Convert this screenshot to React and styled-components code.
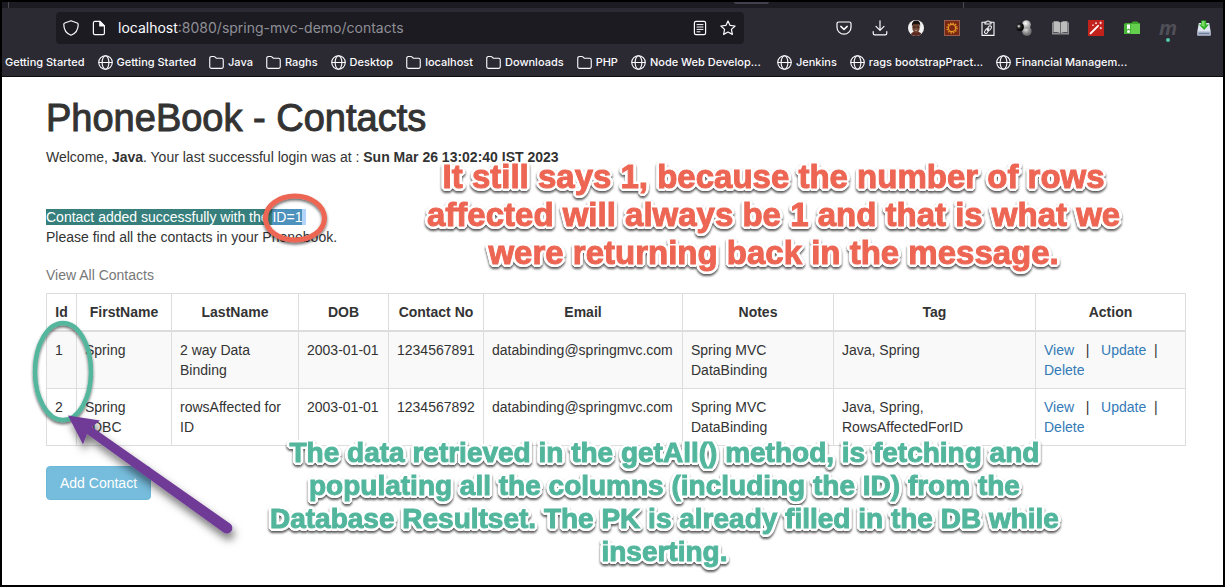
import React from 'react';
import styled, { createGlobalStyle } from 'styled-components';

const GlobalStyle = createGlobalStyle`
  * { box-sizing: border-box; }
  body {
    margin: 0;
    background: #fff;
    color: #333;
    font: 14px/20px "Liberation Sans", Arial, sans-serif;
  }
`;

const Frame = styled.div`
  min-height: 100vh;
  border: 2px solid #000;
  display: flex;
  flex-direction: column;
  overflow: hidden;
`;

/* ---------- browser chrome ---------- */

const Chrome = styled.header`
  background: #2b2a33;
  color: #fbfbfe;
  font-family: Inter, "Liberation Sans", sans-serif;
  border-bottom: 1px solid #0c0c0d;
`;

const TabStrip = styled.div`
  height: 6px;
  background: #1c1b22;
  display: flex;
  padding: 0 259px 0 6px;
`;

const TabDivider = styled.span`
  width: 1px;
  background: #4a4953;
`;

const TabHandle = styled.span`
  width: 35px;
  height: 2px;
  margin-left: auto;
  margin-right: 194px;
  background: #42414d;
  border-radius: 0 0 2px 2px;
`;

const Toolbar = styled.div`
  display: flex;
  align-items: center;
  padding: 4px 1px 4px 54px;
`;

const AddressBar = styled.form`
  flex: 1;
  min-width: 0;
  height: 32px;
  display: flex;
  align-items: center;
  padding: 0 6px;
  background: #1c1b22;
  border-radius: 4px;
  margin-right: 82px;
  font-size: 14px;
`;

const AddressHost = styled.label`
  color: #fbfbfe;
`;

const AddressInput = styled.input`
  flex: 1;
  min-width: 0;
  border: 0;
  padding: 0;
  outline: 0;
  background: none;
  color: #8f8f96;
  font: inherit;
`;

const IconButton = styled.button`
  flex: none;
  width: ${p => p.$width || 36}px;
  height: 32px;
  padding: 0;
  border: 0;
  background: none;
  color: inherit;
  display: flex;
  align-items: center;
  justify-content: center;
  svg { display: block; overflow: visible; }
`;

const Extensions = styled.div`
  display: flex;
`;

const Bookmarks = styled.nav`
  display: flex;
  gap: 13px;
  height: 28px;
  padding-left: 3px;
  align-items: center;
  white-space: nowrap;
  font-size: 11px;
  font-weight: 500;
`;

const Bookmark = styled.a`
  display: flex;
  flex: none;
  align-items: center;
  gap: 4px;
  min-width: ${p => (p.$wide ? '133px' : '0')};
  color: inherit;
  text-decoration: none;
`;

/* ---------- page ---------- */

const Page = styled.main`
  position: relative;
  flex: 1;
  padding: 20px 37px 20px 44px;
`;

const Title = styled.h1`
  margin: 0 0 8px;
  font-size: 38px;
  line-height: 42px;
  font-weight: 400;
  -webkit-text-stroke: 1px #333;
`;

const Line = styled.p`
  margin: 0;
`;

const Messages = styled.section`
  margin-top: 40px;
`;

const Marked = styled.span`
  background: ${p => p.$tone};
  color: #fff;
`;

const ContactsTable = styled.table`
  width: 100%;
  margin: 10px 0 20px;
  table-layout: fixed;
  border-collapse: collapse;
  border: 1px solid #ddd;
`;

const Caption = styled.caption`
  padding: 8px 0;
  color: #777;
  text-align: left;
`;

const Col = styled.col`
  width: ${p => (p.$width ? `${p.$width}px` : 'auto')};
`;

const Th = styled.th`
  padding: 8px;
  border: 1px solid #ddd;
  border-bottom-width: 2px;
  text-align: center;
  white-space: nowrap;
`;

const Td = styled.td`
  padding: 8px;
  border: 1px solid #ddd;
  vertical-align: top;
`;

const Row = styled.tr`
  background: ${p => (p.$striped ? '#f9f9f9' : '#fff')};
`;

const ActionLink = styled.a`
  color: #337ab7;
  text-decoration: none;
`;

const AddButton = styled.button`
  height: 34px;
  padding: 0 13px;
  border: 1px solid #6bb9d9;
  border-radius: 4px;
  background: #76bcdc;
  color: #fff;
  font: inherit;
`;

/* ---------- annotations over the page ---------- */

const Note = styled.p`
  position: absolute;
  z-index: 2;
  margin: 0;
  top: ${p => p.$top}px;
  left: ${p => p.$left}px;
  color: ${p => p.$color};
  font-size: ${p => p.$size}px;
  line-height: ${p => p.$leading}px;
  font-weight: 700;
  text-align: center;
  white-space: nowrap;
  -webkit-text-stroke: 1px ${p => p.$color};
  text-shadow:
    3px 0 #fff, -3px 0 #fff, 0 3px #fff, 0 -3px #fff,
    2px 2px #fff, -2px 2px #fff, 2px -2px #fff, -2px -2px #fff,
    3px 1px #fff, -3px 1px #fff, 1px 3px #fff, -1px 3px #fff,
    3px -1px #fff, -3px -1px #fff, 1px -3px #fff, -1px -3px #fff;
  filter: drop-shadow(0 2px 1px rgba(0, 0, 0, 0.65));
  pointer-events: none;
`;

const Drawing = styled.svg`
  position: absolute;
  z-index: 1;
  top: 0;
  left: 0;
  overflow: visible;
  pointer-events: none;
`;

/* ---------- icons ---------- */

const Svg = ({ size = 16, children }) => (
  <svg width={size} height={size} viewBox="0 0 16 16" fill="none" stroke="currentColor"
    strokeWidth="1.2" strokeLinecap="round" strokeLinejoin="round" aria-hidden="true">{children}</svg>
);

const Globe = () => (
  <Svg size={15}>
    <circle cx="8" cy="8" r="7.2" />
    <ellipse cx="8" cy="8" rx="3.6" ry="7.2" />
    <path d="M1 8h14" />
  </Svg>
);
const Folder = () => (
  <Svg size={15}>
    <path d="M.8 12.4V3.4a1.8 1.8 0 0 1 1.8-1.8h2.6c.6 0 1 .2 1.4.6l1.1 1.2h5.7a1.8 1.8 0 0 1 1.8 1.8v7.200a1.800 1.800 0 0 1-1.800 1.800H2.600A1.800 1.800 0 0 1 .8 12.400z" />
  </Svg>
);
const Shield = () => (
  <Svg><path d="M8 .8 14.200 3c.7.3 1 .7 1 1.400 0 5-2.200 8.800-7.200 10.800C3 13.200.8 9.400.8 4.400c0-.7.3-1.100 1-1.400z" /></Svg>
);
const PageIcon = () => (
  <Svg>
    <path d="M3.800 1.400h5.200l4.400 4.400v7.400c0 .8-.6 1.400-1.400 1.400H3.800c-.8 0-1.400-.6-1.400-1.400V2.800c0-.8.600-1.400 1.400-1.400z" />
    <path d="M8.800 1.400v4.600h4.600z" fill="currentColor" />
  </Svg>
);
const Reader = () => (
  <Svg>
    <rect x="2.400" y="1.400" width="11.200" height="13.200" rx="1.600" />
    <path d="M5 4.600h6M5 7h6M5 9.400h6M5 11.800h3" strokeWidth="1" />
  </Svg>
);
const Star = () => (
  <Svg><path d="M8 .9l2.100 4.500 5 .6-3.700 3.400 1 5L8 12l-4.400 2.400 1-5L.9 6l5-.6z" /></Svg>
);
const Pocket = () => (
  <Svg>
    <path d="M2.600 2h10.800c.9 0 1.600.7 1.600 1.600v3.600a7 7 0 0 1-14 0V3.600C1 2.700 1.700 2 2.600 2z" />
    <path d="M4.800 6.400 8 9.400l3.200-3" strokeWidth="1.500" />
  </Svg>
);
const Download = () => (
  <Svg>
    <path d="M8 .8v9.400M4 6.400l4 4 4-4M1.200 11.600v1.600c0 1 .7 1.600 1.600 1.600h10.400c1 0 1.600-.7 1.600-1.600v-1.600" />
  </Svg>
);
const Avatar = () => (
  <svg width="16" height="16" viewBox="0 0 16 16" aria-hidden="true">
    <clipPath id="face"><circle cx="8" cy="8" r="8" /></clipPath>
    <g clipPath="url(#face)">
      <rect width="16" height="16" fill="#f2f2f2" />
      <path d="M2.500 16c0-3 2-4.500 5.500-4.500s6 1.500 6 4.500z" fill="#5e2a22" />
      <ellipse cx="8" cy="7.400" rx="3.700" ry="5.300" fill="#6f4433" />
      <path d="M4 6.500C3.600 2.400 5.400.6 8.200.6s4.500 1.800 3.900 5.900l-1-2.300H5.200z" fill="#17120f" />
      <path d="M5 7h2.400M8.800 7h2.400" stroke="#251713" strokeWidth="1" />
      <path d="M6.600 10q1.400 1 2.800 0" stroke="#d9c4ba" fill="none" strokeWidth=".7" />
    </g>
  </svg>
);
const Sun = () => (
  <svg width="16" height="16" viewBox="0 0 16 16" aria-hidden="true">
    <rect x=".5" y=".5" width="15" height="15" fill="#7d2712" stroke="#95604f" />
    <circle cx="8" cy="8" r="3.600" fill="none" stroke="#e39a28" strokeWidth="1.200" />
    <circle cx="8" cy="8" r="4.900" fill="none" stroke="#e39a28" strokeWidth="1.500" strokeDasharray="1.300 1.265" />
  </svg>
);
const Clipboard = () => (
  <Svg>
    <path d="M5 2.200H2V15.400h12V2.200h-3" strokeWidth="1.100" />
    <path d="M5 4V2h1.500a1.600 1.600 0 0 1 3 0H11v2z" strokeWidth="1.100" />
    <rect x="8" y="5.600" width="3" height="4.800" rx="1.500" transform="rotate(32 9.500 8)" strokeWidth="1" />
    <rect x="5" y="8.800" width="3" height="4.800" rx="1.500" transform="rotate(32 6.500 11.200)" strokeWidth="1" />
    <path d="M7.200 10.800 9 8.200" strokeWidth="1" />
  </Svg>
);
const Balls = () => (
  <svg width="16" height="16" viewBox="0 0 16 16" aria-hidden="true">
    <radialGradient id="dark" cx=".35" cy=".4"><stop offset="0" stopColor="#fff" /><stop offset=".45" stopColor="#333" /><stop offset="1" stopColor="#050505" /></radialGradient>
    <radialGradient id="pale" cx=".4" cy=".35"><stop offset="0" stopColor="#fff" /><stop offset="1" stopColor="#a6a6a6" /></radialGradient>
    <radialGradient id="mid" cx=".4" cy=".35"><stop offset="0" stopColor="#ddd" /><stop offset="1" stopColor="#777" /></radialGradient>
    <circle cx="10.800" cy="11" r="4.800" fill="url(#mid)" />
    <circle cx="10.400" cy="4.600" r="4.400" fill="url(#pale)" />
    <circle cx="4" cy="7" r="3.900" fill="url(#dark)" />
  </svg>
);
const Book = () => (
  <svg width="17" height="14" viewBox="0 0 17 14" aria-hidden="true">
    <path d="M0 1.400h1V12h6.500l1 1 1-1H16V1.400h1V13.500H0z" fill="#8e8e90" />
    <path d="M1.400.4C4 0 7 0 8.200 1.400v10.800C6.500 11 4 11 1.400 11.600zM15.600.4C13 0 10 0 8.800 1.400v10.800c1.700-1.200 4.200-1.200 6.800-.6z" fill="#bcbcbc" />
    <path d="M8.500 1.200v11.600" stroke="#6b6b6d" />
  </svg>
);
const Wand = () => (
  <svg width="16" height="16" viewBox="0 0 16 16" aria-hidden="true">
    <rect width="16" height="16" fill="#c3211b" />
    <path d="M2.600 13.400 9.400 6.600" stroke="#fff" strokeWidth="2" strokeLinecap="round" />
    <path d="m9.600 6.400 1.200-1.200" stroke="#fff" strokeWidth="1.400" />
    <path d="M8 2.200v2M7 3.200h2M12.600 1.600v2.600M11.300 2.900h2.600M12.800 7v2.200M11.700 8.100h2.200M5 4.500v1.400M4.300 5.200h1.400" stroke="#fff" strokeWidth=".8" />
  </svg>
);
const GreenFolder = () => (
  <svg width="16" height="14" viewBox="0 0 16 14" aria-hidden="true">
    <path d="M0 3.500 1 2h6.500L9 .5h4L15 2h1v11H0z" fill="#3fa52c" />
    <path d="M0 3h7v10H0z" fill="#48b636" /><path d="M7 3h9v10H7z" fill="#63cf4c" />
    <path d="M3 3.400h3v5L4.500 7.400 3 8.400z" fill="#fff" />
    <circle cx="4.500" cy="10.400" r="1.500" fill="#fff" />
  </svg>
);
const LetterM = styled.span`
  display: block;
  position: relative;
  color: #504f58;
  font: italic 700 20px/20px "Open Sans", sans-serif;
  &::after {
    content: "";
    position: absolute;
    top: 20px;
    left: 50%;
    width: 4px;
    height: 4px;
    margin-left: -2px;
    border-radius: 50%;
    background: #54c8ac;
  }
`;
const Drive = () => (
  <svg width="14" height="16" viewBox="0 0 14 16" aria-hidden="true">
    <path d="M1.800 3h10.400L13.600 11v4.500H.4V11z" fill="#dfe5f1" />
    <path d="M.4 11.500h13.200v4H.4z" fill="#a4afc6" />
    <path d="M2 13.500h10" stroke="#71809a" strokeWidth="1" />
    <path d="M4.200.5h5v4h2.800L7.200 10 1.800 4.500h2.400z" fill="#35b127" />
    <path d="M5 1h2.600v6L3.600 5H5z" fill="#8fe878" opacity=".8" />
  </svg>
);

/* ---------- data ---------- */

const bookmarks = [
  { label: 'Getting Started' },
  { label: 'Getting Started', icon: Globe },
  { label: 'Java', icon: Folder },
  { label: 'Raghs', icon: Folder },
  { label: 'Desktop', icon: Globe },
  { label: 'localhost', icon: Folder },
  { label: 'Downloads', icon: Folder },
  { label: 'PHP', icon: Folder },
  { label: 'Node Web Develop...', icon: Globe, wide: true },
  { label: 'Jenkins', icon: Globe },
  { label: 'rags bootstrapPract...', icon: Globe, wide: true },
  { label: 'Financial Managem...', icon: Globe, wide: true },
];

const extensions = [
  ['Save to Pocket', Pocket], ['Downloads', Download], ['Account', Avatar],
  ['Sun', Sun], ['Copy link', Clipboard], ['Spheres', Balls], ['Reading list', Book],
  ['Wand', Wand], ['Archive', GreenFolder],
  ['Marker', () => <LetterM>m</LetterM>], ['Save to disk', Drive],
];

const columns = [
  ['Id', 30], ['FirstName', 95], ['LastName', 127], ['DOB', 90], ['Contact No', 95],
  ['Email', 199], ['Notes', 151], ['Tag', 0], ['Action', 150],
];

const contacts = [
  ['1', 'Spring', '2 way Data Binding', '2003-01-01', '1234567891', 'databinding@springmvc.com', 'Spring MVC DataBinding', 'Java, Spring'],
  ['2', 'Spring JDBC', 'rowsAffected for ID', '2003-01-01', '1234567892', 'databinding@springmvc.com', 'Spring MVC DataBinding', 'Java, Spring, RowsAffectedForID'],
];

export default function App() {
  return (
    <Frame>
      <GlobalStyle />
      <Chrome>
        <TabStrip><TabDivider /><TabHandle /><TabDivider /></TabStrip>
        <Toolbar>
          <AddressBar onSubmit={e => e.preventDefault()}>
            <IconButton type="button" $width={18} aria-label="Tracking protection"><Shield /></IconButton>
            <IconButton type="button" $width={38} aria-label="Site information"><PageIcon /></IconButton>
            <AddressHost htmlFor="address">localhost</AddressHost>
            <AddressInput id="address" defaultValue=":8080/spring-mvc-demo/contacts" spellCheck={false} />
            <IconButton type="button" aria-label="Reader view"><Reader /></IconButton>
            <IconButton type="button" $width={20} aria-label="Bookmark this page"><Star /></IconButton>
          </AddressBar>
          <Extensions>
            {extensions.map(([name, Icon]) => (
              <IconButton key={name} type="button" aria-label={name}><Icon /></IconButton>
            ))}
          </Extensions>
        </Toolbar>
        <Bookmarks>
          {bookmarks.map(({ label, icon: Icon, wide }, i) => (
            <Bookmark key={i} href="#" $wide={wide}>{Icon && <Icon />}{label}</Bookmark>
          ))}
        </Bookmarks>
      </Chrome>

      <Page>
        <Title>PhoneBook - Contacts</Title>
        <Line>
          Welcome, <b>Java</b>. Your last successful login was at : <b>Sun Mar 26 13:02:40 IST 2023</b>
        </Line>
        <Messages>
          <Line>
            <Marked $tone="#367f7c">Contact added successfully with the </Marked>
            <Marked $tone="#4d92bd">ID=1</Marked>
            <Marked $tone="#b3d5fb">&nbsp;</Marked>
          </Line>
          <Line>Please find all the contacts in your Phonebook.</Line>
        </Messages>
        <ContactsTable>
          <Caption>View All Contacts</Caption>
          <colgroup>
            {columns.map(([name, width]) => <Col key={name} $width={width} />)}
          </colgroup>
          <thead>
            <tr>{columns.map(([name]) => <Th key={name} scope="col">{name}</Th>)}</tr>
          </thead>
          <tbody>
            {contacts.map((contact, i) => (
              <Row key={contact[0]} $striped={i % 2 === 0}>
                {contact.map((value, c) => <Td key={c}>{value}</Td>)}
                <Td>
                  <ActionLink href="#">View</ActionLink>
                  {'\u00a0\u00a0 |\u00a0\u00a0 '}
                  <ActionLink href="#">Update</ActionLink>
                  {'\u00a0\u00a0| '}
                  <ActionLink href="#">Delete</ActionLink>
                </Td>
              </Row>
            ))}
          </tbody>
        </ContactsTable>
        <AddButton type="button">Add Contact</AddButton>

        <Drawing width="300" height="500" viewBox="2 77 300 500" aria-hidden="true">
          <defs>
            <filter id="shade" x="-30%" y="-30%" width="160%" height="160%">
              <feDropShadow dx="0" dy="2" stdDeviation="1.500" floodOpacity=".6" />
            </filter>
            <filter id="arrowShade" x="-30%" y="-30%" width="160%" height="160%">
              <feDropShadow dx="2" dy="6" stdDeviation="4" floodOpacity=".55" />
            </filter>
          </defs>
          <ellipse cx="295" cy="218" rx="29.500" ry="22" fill="none" stroke="#ed6553" strokeWidth="5" filter="url(#shade)" />
          <ellipse cx="63" cy="371.500" rx="28" ry="48.500" fill="none" stroke="#52b69d" strokeWidth="4.500" filter="url(#shade)" />
          <path d="M68 415.500 100 420.500 92 427 230 523.500a5.500 5.500 0 0 1-6.400 9L87 434l-4 10.500z" fill="#703a96" filter="url(#arrowShade)" />
        </Drawing>
        <Note $top={81} $left={425} $size={33} $leading={38} $color="#ed6553">
          It still says 1, because the number of rows<br />
          affected will always be 1 and that is what we<br />
          were returning back in the message.
        </Note>
        <Note $top={359} $left={268} $size={28} $leading={33} $color="#52b69d">
          The data retrieved in the getAll() method, is fetching and<br />
          populating all the columns (including the ID) from the<br />
          Database Resultset. The PK is already filled in the DB while<br />
          inserting.
        </Note>
      </Page>
    </Frame>
  );
}
